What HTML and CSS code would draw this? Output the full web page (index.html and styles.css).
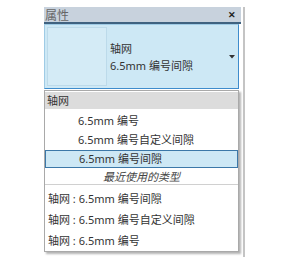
FILE: index.html
```html
<!DOCTYPE html>
<html lang="zh-CN">
<head>
    <meta charset="UTF-8">
    <title>属性</title>
    <link rel="stylesheet" href="styles.css">
</head>
<body>
    <div class="frame">
        <div class="panel">
            <div class="titlebar">
                <span class="title">属性</span>
                <span class="close">✕</span>
            </div>
            <div class="selector">
                <div class="thumb"></div>
                <div class="type-name">
                    <p>轴网</p>
                    <p>6.5mm 编号间隙</p>
                </div>
                <svg class="arrow" width="6" height="4" viewBox="0 0 6 4"><path d="M0 0h6L3 3.5z" fill="#333"/></svg>
            </div>
            <div class="dropdown">
                <div class="group">轴网</div>
                <div class="item first">6.5mm 编号</div>
                <div class="item">6.5mm 编号自定义间隙</div>
                <div class="item selected">6.5mm 编号间隙</div>
                <div class="recent">最近使用的类型</div>
                <div class="recent-item first">轴网 : 6.5mm 编号间隙</div>
                <div class="recent-item">轴网 : 6.5mm 编号自定义间隙</div>
                <div class="recent-item">轴网 : 6.5mm 编号</div>
            </div>
        </div>
        <div class="rule"></div>
    </div>
</body>
</html>
```

FILE: styles.css
```css
* {
    margin: 0;
    padding: 0;
    box-sizing: border-box;
}

body {
    background-color: #fff;
    font-family: "Noto Sans", "Noto Sans CJK SC", sans-serif;
    font-size: 11px;
    color: #333;
}

.frame {
    display: flex;
    margin: 7px 0 0 44px;
}

.panel {
    width: 197px;
}

.rule {
    width: 2px;
    height: 250px;
    margin-left: 2px;
    background-color: #c4c4c4;
}

.titlebar {
    height: 17px;
    display: flex;
    align-items: center;
    justify-content: space-between;
    background-color: #c8d2dd;
    border-bottom: 2px solid #3f6280;
    padding: 0 5px 0 1px;
}

.title {
    color: #666;
    font-size: 12px;
}

.close {
    font-size: 9px;
    font-weight: bold;
    color: #222;
}

.selector {
    width: 195px;
    height: 65px;
    display: flex;
    align-items: center;
    background-color: #cde8f5;
    border: 1px solid #9fcbe5;
    border-right-color: #3e8ccc;
    border-bottom-color: #3e8ccc;
    padding: 2px;
}

.thumb {
    width: 60px;
    height: 59px;
    background-color: #d4ebf6;
    border: 1px solid #bcdaea;
}

.type-name {
    flex: 1;
    padding-left: 3px;
    line-height: 17px;
    padding-top: 1px;
}

.arrow {
    margin-right: 1px;
}

.dropdown {
    width: 195px;
    margin-top: 1px;
    background-color: #fff;
    border: 1px solid #a9a9a9;
    box-shadow: 2px 2px 2px rgba(0, 0, 0, 0.3);
}

.group {
    height: 17px;
    line-height: 17px;
    background-color: #dcdcdc;
    padding-left: 2px;
    margin-top: 1px;
}

.item {
    height: 19px;
    line-height: 19px;
    padding-left: 33px;
}

.item.first {
    margin-top: 2px;
}

.selected {
    height: 18px;
    line-height: 16px;
    margin-top: 1px;
    background-color: #cde8f5;
    border: 1px solid #3c78a8;
}

.recent {
    height: 17px;
    line-height: 17px;
    text-align: center;
    font-style: italic;
    color: #444;
    border-bottom: 1px solid #d0d0d0;
}

.recent-item {
    height: 21px;
    line-height: 21px;
    padding-left: 3px;
}

.recent-item.first {
    margin-top: 3px;
}
```
